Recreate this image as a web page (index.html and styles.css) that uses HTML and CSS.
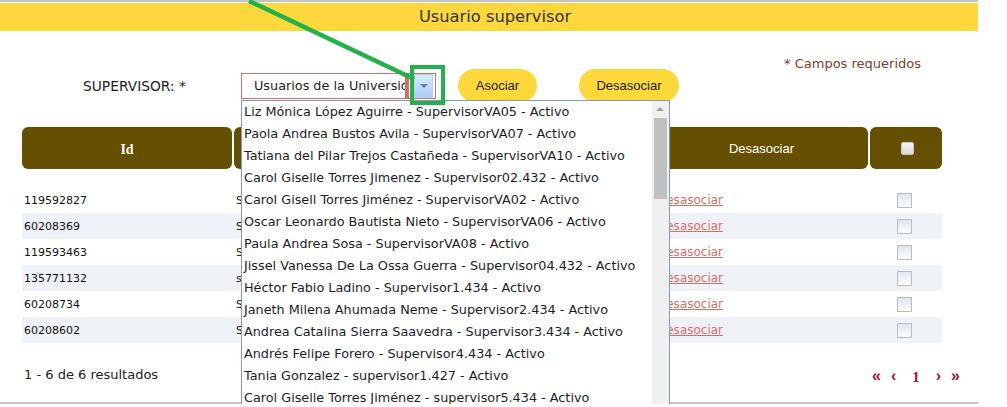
FILE: index.html
```html
<!DOCTYPE html>
<html lang="es">
<head>
    <meta charset="UTF-8">
    <title>Usuario supervisor</title>
    <link rel="stylesheet" href="styles.css">
</head>
<body>

    <div class="page">
        <div class="title-bar">Usuario supervisor</div>

        <div class="form-area">
            <div class="form-row">
                <label class="field-label">SUPERVISOR: *</label>
                <div class="select">
                    <span class="select-text">Usuarios de la Universidad</span>
                    <span class="select-mark"></span>
                    <span class="select-button"><span class="caret"></span></span>

                    <!-- lista abierta del combo -->
                    <div class="listbox">
                        <ul class="options">
                            <li>Liz Mónica López Aguirre - SupervisorVA05 - Activo</li>
                            <li>Paola Andrea Bustos Avila - SupervisorVA07 - Activo</li>
                            <li>Tatiana del Pilar Trejos Castañeda - SupervisorVA10 - Activo</li>
                            <li>Carol Giselle Torres Jimenez - Supervisor02.432 - Activo</li>
                            <li>Carol Gisell Torres Jiménez - SupervisorVA02 - Activo</li>
                            <li>Oscar Leonardo Bautista Nieto - SupervisorVA06 - Activo</li>
                            <li>Paula Andrea Sosa - SupervisorVA08 - Activo</li>
                            <li>Jissel Vanessa De La Ossa Guerra - Supervisor04.432 - Activo</li>
                            <li>Héctor Fabio Ladino - Supervisor1.434 - Activo</li>
                            <li>Janeth Milena Ahumada Neme - Supervisor2.434 - Activo</li>
                            <li>Andrea Catalina Sierra Saavedra - Supervisor3.434 - Activo</li>
                            <li>Andrés Felipe Forero - Supervisor4.434 - Activo</li>
                            <li>Tania Gonzalez - supervisor1.427 - Activo</li>
                            <li>Carol Giselle Torres Jiménez - supervisor5.434 - Activo</li>
                        </ul>
                        <div class="scrollbar">
                            <span class="scroll-up"></span>
                            <span class="scroll-thumb"></span>
                        </div>
                    </div>
                </div>
                <button class="pill-button asociar">Asociar</button>
                <button class="pill-button desasociar">Desasociar</button>
            </div>
            <div class="required">* Campos requeridos</div>
        </div>

        <div class="grid">
            <div class="grid-head">
                <div class="head-cell id-head">Id</div>
                <div class="head-cell">Usuario</div>
                <div class="head-cell">Desasociar</div>
                <div class="head-cell"><span class="head-check"></span></div>
            </div>

            <div class="grid-body" id="grid-body">
                <!-- filas generadas en el script -->
            </div>
        </div>

        <div class="grid-footer">
            <span class="results">1 - 6 de 6 resultados</span>
            <div class="pager">
                <a href="#">«</a>
                <a href="#">‹</a>
                <span class="page-num">1</span>
                <a href="#">›</a>
                <a href="#">»</a>
            </div>
        </div>
    </div>

    <!-- marca verde sobre el botón del combo -->
    <svg class="annotation" width="1007" height="407" viewBox="0 0 1007 407">
        <line x1="249" y1="1" x2="414" y2="79" stroke="#22b14c" stroke-width="4.5" />
        <rect x="412" y="67" width="31" height="36" fill="none" stroke="#22b14c" stroke-width="4" />
    </svg>

    <script>
        const rows = [
            { id: '119592827', user: 'SupervisorVA05' },
            { id: '60208369', user: 'SupervisorVA07' },
            { id: '119593463', user: 'SupervisorVA10' },
            { id: '135771132', user: 'supervisor1.427' },
            { id: '60208734', user: 'Supervisor1.434' },
            { id: '60208602', user: 'Supervisor2.434' }
        ];

        const body = document.getElementById('grid-body');
        rows.forEach(row => {
            body.innerHTML += `
                <div class="grid-row">
                    <div class="cell">${row.id}</div>
                    <div class="cell">${row.user}</div>
                    <div class="cell"><a class="unlink" href="#">Desasociar</a></div>
                    <div class="cell check-cell"><span class="check"></span></div>
                </div>`;
        });
    </script>

</body>
</html>
```

FILE: styles.css
```css
html, body {
    margin: 0;
    padding: 0;
    overflow: hidden;
    background: #fff;
}

body {
    font-family: "DejaVu Sans", Verdana, sans-serif;
    color: #222;
}

.page {
    width: 978px;
    border-top: 2px solid #c4c4c4;
    border-bottom: 2px solid #c4c4c4;
}

.title-bar {
    margin-top: 1px;
    height: 28px;
    line-height: 28px;
    padding-left: 12px;
    background: #fdd83a;
    text-align: center;
    font-size: 16.3px;
    color: #333;
}

.form-area {
    display: flex;
    align-items: flex-start;
    padding: 0 57px 0 83px;
    margin-top: 25px;
}

.form-row {
    display: flex;
    align-items: center;
    margin-top: 13px;
}

.field-label {
    width: 158px;
    font-size: 13.8px;
    color: #222;
}

.select {
    position: relative;
    display: flex;
    align-items: center;
    width: 193px;
    height: 24px;
    border: 1px solid #d86a6a;
    background: #fff;
}

.select-text {
    width: 151px;
    padding-left: 12px;
    overflow: hidden;
    white-space: nowrap;
    font-size: 12.8px;
    color: #222;
}

.select-mark {
    width: 4px;
    height: 24px;
    background: #d86a6a;
}

.select-button {
    display: flex;
    align-items: center;
    justify-content: center;
    width: 17px;
    height: 22px;
    margin-left: 5px;
    background: linear-gradient(#dcebfc, #a9cdf6);
    border: 1px solid #b8d2f0;
}

.caret {
    width: 0;
    height: 0;
    border-left: 4px solid transparent;
    border-right: 4px solid transparent;
    border-top: 4px solid #6d7f96;
}

.listbox {
    position: absolute;
    top: 26px;
    left: -1px;
    z-index: 5;
    display: flex;
    width: 427px;
    height: 307px;
    background: #fff;
    border: 1px solid #7f9db9;
    border-bottom: none;
    overflow: hidden;
}

.options {
    flex: 1;
    margin: 0;
    padding: 0;
    list-style: none;
    overflow: hidden;
}

    .options li {
        height: 22px;
        line-height: 22px;
        padding-left: 2px;
        font-size: 12.8px;
        color: #1c1c28;
        white-space: nowrap;
    }

.scrollbar {
    position: relative;
    flex: none;
    width: 17px;
    background: #f0f0f0;
}

.scroll-up {
    position: absolute;
    top: 6px;
    left: 4px;
    width: 0;
    height: 0;
    border-left: 4px solid transparent;
    border-right: 4px solid transparent;
    border-bottom: 4px solid #a3a3a3;
}

.scroll-thumb {
    position: absolute;
    top: 17px;
    left: 2px;
    width: 13px;
    height: 81px;
    background: #c1c1c1;
}

.pill-button {
    height: 33px;
    border: none;
    border-radius: 17px;
    background: #fdd83a;
    font-family: "Liberation Sans", Arial, sans-serif;
    font-size: 13px;
    color: #222;
    padding: 0;
}

.asociar {
    width: 79px;
    margin-left: 22px;
}

.desasociar {
    width: 100px;
    margin-left: 42px;
}

.required {
    margin-left: auto;
    line-height: 16px;
    font-size: 13px;
    color: #7a4030;
}

.grid {
    width: 920px;
    margin: 25px 0 0 22px;
}

.grid-head, .grid-row {
    display: grid;
    grid-template-columns: 210px 419px 213px 72px;
    column-gap: 2px;
}

.head-cell {
    box-sizing: border-box;
    height: 42px;
    display: flex;
    align-items: center;
    justify-content: center;
    background: #654f00;
    border-radius: 6px;
    color: #fff;
    font-family: "Liberation Sans", Arial, sans-serif;
    font-size: 13px;
}

    .head-cell.id-head {
        font-family: "Liberation Serif", serif;
        font-weight: bold;
        font-size: 14px;
        padding-top: 3px;
    }

.head-check {
    width: 11px;
    height: 11px;
    margin-left: 2px;
    background: linear-gradient(#f4f4f4, #d8d8d8);
    border: 1px solid #c8c8c8;
    border-radius: 2px;
}

.grid-body {
    margin-top: 18px;
}

.grid-row {
    height: 26px;
}

    .grid-row:nth-child(even) {
        background: #eff3f8;
    }

.cell {
    display: flex;
    align-items: center;
    padding-left: 2px;
    font-size: 11px;
    color: #111;
    white-space: nowrap;
    overflow: hidden;
}

.unlink {
    font-size: 12px;
    color: #dc6b66;
}

.check-cell {
    padding-left: 27px;
}

.check {
    width: 13px;
    height: 13px;
    border: 1px solid #b9bcc2;
    background: linear-gradient(#dfe6ee, #fdfdfd);
}

.grid-footer {
    display: flex;
    justify-content: space-between;
    align-items: center;
    margin: 20px 18px 17px 24px;
    height: 22px;
}

.results {
    font-size: 13px;
    color: #222;
}

.pager {
    display: flex;
    align-items: center;
    gap: 10px;
    padding-top: 4px;
    font-family: "Liberation Sans", Arial, sans-serif;
    font-weight: bold;
    color: #a0141e;
}

    .pager a {
        color: #a0141e;
        text-decoration: none;
        font-size: 16px;
    }

.page-num {
    font-family: "Liberation Serif", serif;
    font-size: 15px;
    padding: 2px 6px 0;
}

.annotation {
    position: absolute;
    top: 0;
    left: 0;
    z-index: 10;
    pointer-events: none;
}
```
